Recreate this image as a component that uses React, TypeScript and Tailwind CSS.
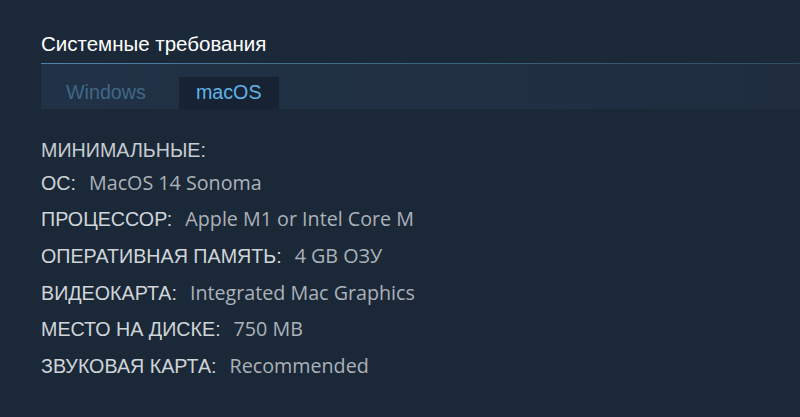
import React from 'react';

const rows: [string, string][] = [
  ['ОС:', 'MacOS 14 Sonoma'],
  ['ПРОЦЕССОР:', 'Apple M1 or Intel Core M'],
  ['ОПЕРАТИВНАЯ ПАМЯТЬ:', '4 GB ОЗУ'],
  ['ВИДЕОКАРТА:', 'Integrated Mac Graphics'],
  ['МЕСТО НА ДИСКЕ:', '750 MB'],
  ['ЗВУКОВАЯ КАРТА:', 'Recommended'],
];

const App: React.FC = () => {
  return (
    <div className="w-[800px] h-[417px] bg-[#1b2838] pl-[41px] pt-[30px] overflow-hidden font-['Liberation_Sans',Arial,sans-serif]">
      <h2 className="text-[20.5px] leading-[28px] text-white pb-[5px]">Системные требования</h2>
      <div className="h-px bg-gradient-to-r from-[#4f84a8] via-[#3a6580] to-[#2f4d61]" />
      <div className="h-[45px] bg-gradient-to-r from-[#213246] to-[#1f2d3f] flex items-end pl-2">
        <div className="h-8 px-[17px] flex items-center text-[19.7px] text-[#3f6888]">Windows</div>
        <div className="h-8 px-[17px] ml-4 flex items-center text-[19.7px] text-[#5fb4e8] bg-[#172232]">macOS</div>
      </div>
      <div className="mt-[26px] text-[19.7px] text-[#acb2b8]">
        <div className="h-[30px] leading-[30px] text-[#c6ccd1]">МИНИМАЛЬНЫЕ:</div>
        {rows.map(([label, value], i) => (
          <div key={label} className={i === 0 ? 'h-9 leading-9' : 'h-[36.8px] leading-[36.8px]'}>
            <span className="text-[#d0d5d9]">{label}</span>
            <span className="ml-[13px] font-['Open_Sans',sans-serif] text-[#acb2b8]">{value}</span>
          </div>
        ))}
      </div>
    </div>
  );
};

export default App;
